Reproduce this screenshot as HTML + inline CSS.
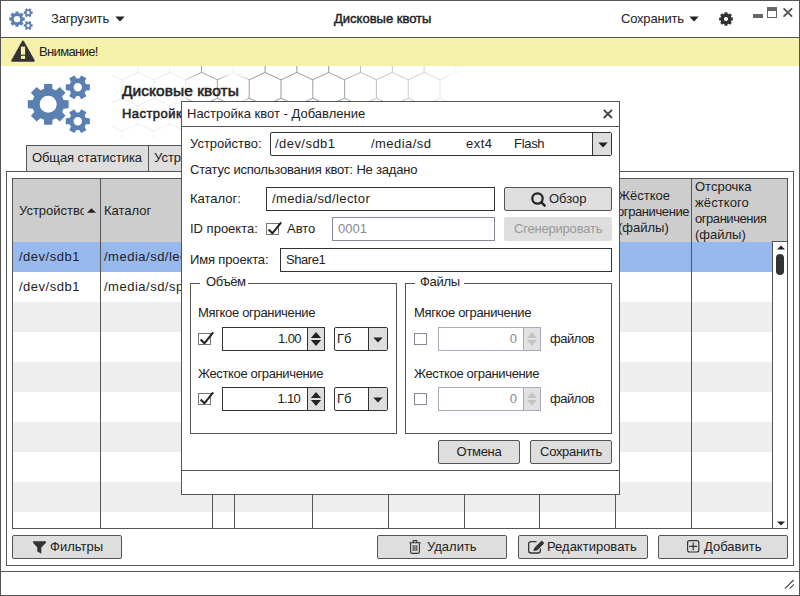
<!DOCTYPE html>
<html lang="ru">
<head>
<meta charset="utf-8">
<title>Дисковые квоты</title>
<style>
html,body{margin:0;padding:0;}
body{width:800px;height:596px;position:relative;overflow:hidden;background:#fff;
 font-family:"Liberation Sans",sans-serif;font-size:13px;color:#222;}
*{box-sizing:border-box;}
.a{position:absolute;white-space:nowrap;line-height:16px;}
.win{position:absolute;left:0;top:0;width:800px;height:596px;border:1px solid #555;border-left-width:1px;}
.btn{position:absolute;background:#dedede;border:1px solid #555;border-radius:2px;}
.inp{position:absolute;background:#fff;border:1px solid #333;}
.ln{position:absolute;background:#555;}
.b{font-weight:bold;}
svg{position:absolute;overflow:visible;}
</style>
</head>
<body>
<!-- ===== main window ===== -->
<div class="win"></div>
<div class="ln" style="left:0;top:37px;width:800px;height:1px;"></div>

<!-- title bar -->
<svg style="left:9px;top:8px;" width="24" height="22" viewBox="0 0 63.5 58"><path fill="#5a80b2" fill-rule="evenodd" d="M36.60,24.96 L41.60,25.24 L41.60,33.36 L36.60,33.64 L35.16,37.12 L38.49,40.86 L32.76,46.59 L29.02,43.26 L25.54,44.70 L25.26,49.70 L17.14,49.70 L16.86,44.70 L13.38,43.26 L9.64,46.59 L3.91,40.86 L7.24,37.12 L5.80,33.64 L0.80,33.36 L0.80,25.24 L5.80,24.96 L7.24,21.48 L3.91,17.74 L9.64,12.01 L13.38,15.34 L16.86,13.90 L17.14,8.90 L25.26,8.90 L25.54,13.90 L29.02,15.34 L32.76,12.01 L38.49,17.74 L35.16,21.48Z M29.70,29.30 A8.50,8.50 0 1,0 12.70,29.30 A8.50,8.50 0 1,0 29.70,29.30Z M59.02,9.15 L62.84,9.34 L62.84,15.26 L59.02,15.45 L57.64,17.84 L59.38,21.25 L54.26,24.21 L52.18,20.99 L49.42,20.99 L47.34,24.21 L42.22,21.25 L43.96,17.84 L42.58,15.45 L38.76,15.26 L38.76,9.34 L42.58,9.15 L43.96,6.76 L42.22,3.35 L47.34,0.39 L49.42,3.61 L52.18,3.61 L54.26,0.39 L59.38,3.35 L57.64,6.76Z M55.00,12.30 A4.20,4.20 0 1,0 46.60,12.30 A4.20,4.20 0 1,0 55.00,12.30Z M59.02,43.05 L62.84,43.24 L62.84,49.16 L59.02,49.35 L57.64,51.74 L59.38,55.15 L54.26,58.11 L52.18,54.89 L49.42,54.89 L47.34,58.11 L42.22,55.15 L43.96,51.74 L42.58,49.35 L38.76,49.16 L38.76,43.24 L42.58,43.05 L43.96,40.66 L42.22,37.25 L47.34,34.29 L49.42,37.51 L52.18,37.51 L54.26,34.29 L59.38,37.25 L57.64,40.66Z M55.00,46.20 A4.20,4.20 0 1,0 46.60,46.20 A4.20,4.20 0 1,0 55.00,46.20Z"/></svg>
<div class="a" id="t_load" style="left:51px;top:11px;letter-spacing:-0.15px;">Загрузить</div>
<svg style="left:115px;top:16px;" width="10" height="6" viewBox="0 0 10 6"><path fill="#222" d="M0.3,0.5 H9.7 L5,5.5Z"/></svg>
<div class="a" id="t_title" style="left:334px;top:11px;-webkit-text-stroke:0.45px #222;">Дисковые квоты</div>
<div class="a" id="t_save" style="left:621px;top:11px;letter-spacing:-0.2px;">Сохранить</div>
<svg style="left:689px;top:16px;" width="10" height="6" viewBox="0 0 10 6"><path fill="#222" d="M0.3,0.5 H9.7 L5,5.5Z"/></svg>
<svg style="left:718px;top:11px;" width="16" height="16" viewBox="0 0 16 16"><path fill="#333" fill-rule="evenodd" d="M13.27,6.42 L14.85,6.58 L14.85,9.42 L13.27,9.58 L12.84,10.61 L13.85,11.84 L11.84,13.85 L10.61,12.84 L9.58,13.27 L9.42,14.85 L6.58,14.85 L6.42,13.27 L5.39,12.84 L4.16,13.85 L2.15,11.84 L3.16,10.61 L2.73,9.58 L1.15,9.42 L1.15,6.58 L2.73,6.42 L3.16,5.39 L2.15,4.16 L4.16,2.15 L5.39,3.16 L6.42,2.73 L6.58,1.15 L9.42,1.15 L9.58,2.73 L10.61,3.16 L11.84,2.15 L13.85,4.16 L12.84,5.39Z M10.10,8.00 A2.10,2.10 0 1,0 5.90,8.00 A2.10,2.10 0 1,0 10.10,8.00Z"/></svg>
<div class="a" style="left:753px;top:14px;width:10px;height:4px;background:#666;"></div>
<div class="a" style="left:767px;top:7px;width:10px;height:11px;border:1px solid #666;border-top-width:4px;background:#fff;"></div>
<svg style="left:783px;top:8px;" width="10" height="9" viewBox="0 0 10 9"><path stroke="#555" stroke-width="1.9" fill="none" d="M0.6,0.4 L9.1,8.6 M9.1,0.4 L0.6,8.6"/></svg>

<!-- warning band -->
<div class="a" style="left:1px;top:38px;width:798px;height:28px;background:#f5f0aa;"></div>
<svg style="left:11px;top:40px;" width="24" height="22" viewBox="0 0 24 22"><path fill="#333" stroke="#333" stroke-width="2" stroke-linejoin="round" d="M12,1.5 L22.8,20.8 H1.2Z"/><rect x="9.9" y="6.6" width="4.2" height="8.1" fill="#f5f0aa"/><rect x="9.9" y="15.8" width="4.2" height="3.1" fill="#f5f0aa"/></svg>
<div class="a" id="t_warn" style="left:39px;top:44px;letter-spacing:-0.65px;">Внимание!</div>

<!-- honeycomb -->
<svg style="left:186px;top:66px;overflow:hidden;" width="280" height="36" viewBox="186 66 280 36"><defs><linearGradient id="hf" gradientUnits="userSpaceOnUse" x1="186" x2="466" y1="0" y2="0"><stop offset="0" stop-color="#fff" stop-opacity="0.5"/><stop offset="0.05" stop-color="#fff" stop-opacity="0.15"/><stop offset="0.12" stop-color="#fff" stop-opacity="0.2"/><stop offset="0.16" stop-color="#fff" stop-opacity="0.88"/><stop offset="0.21" stop-color="#fff" stop-opacity="0.6"/><stop offset="0.23" stop-color="#fff" stop-opacity="0.1"/><stop offset="0.55" stop-color="#fff" stop-opacity="0.15"/><stop offset="0.62" stop-color="#fff" stop-opacity="0.4"/><stop offset="0.85" stop-color="#fff" stop-opacity="0.6"/><stop offset="1" stop-color="#fff" stop-opacity="1"/></linearGradient></defs><path d="M153.8,79.8 L169.7,72.4 L185.6,79.8 M153.8,79.8 V98.2 M185.6,79.8 L201.5,72.4 L217.4,79.8 M185.6,79.8 V98.2 M217.4,79.8 L233.3,72.4 L249.2,79.8 M217.4,79.8 V98.2 M249.2,79.8 L265.1,72.4 L281.0,79.8 M249.2,79.8 V98.2 M281.0,79.8 L296.9,72.4 L312.8,79.8 M281.0,79.8 V98.2 M312.8,79.8 L328.7,72.4 L344.6,79.8 M312.8,79.8 V98.2 M344.6,79.8 L360.5,72.4 L376.4,79.8 M344.6,79.8 V98.2 M376.4,79.8 L392.3,72.4 L408.2,79.8 M376.4,79.8 V98.2 M408.2,79.8 L424.1,72.4 L440.0,79.8 M408.2,79.8 V98.2 M440.0,79.8 L455.9,72.4 L471.8,79.8 M440.0,79.8 V98.2 M169.7,54.0 L185.6,46.6 L201.5,54.0 M169.7,54.0 V72.4 M201.5,54.0 L217.4,46.6 L233.3,54.0 M201.5,54.0 V72.4 M233.3,54.0 L249.2,46.6 L265.1,54.0 M233.3,54.0 V72.4 M265.1,54.0 L281.0,46.6 L296.9,54.0 M265.1,54.0 V72.4 M296.9,54.0 L312.8,46.6 L328.7,54.0 M296.9,54.0 V72.4 M328.7,54.0 L344.6,46.6 L360.5,54.0 M328.7,54.0 V72.4 M360.5,54.0 L376.4,46.6 L392.3,54.0 M360.5,54.0 V72.4 M392.3,54.0 L408.2,46.6 L424.1,54.0 M392.3,54.0 V72.4 M424.1,54.0 L440.0,46.6 L455.9,54.0 M424.1,54.0 V72.4 M455.9,54.0 L471.8,46.6 L487.7,54.0 M455.9,54.0 V72.4 M169.7,105.6 L185.6,98.2 L201.5,105.6 M169.7,105.6 V124.0 M201.5,105.6 L217.4,98.2 L233.3,105.6 M201.5,105.6 V124.0 M233.3,105.6 L249.2,98.2 L265.1,105.6 M233.3,105.6 V124.0 M265.1,105.6 L281.0,98.2 L296.9,105.6 M265.1,105.6 V124.0 M296.9,105.6 L312.8,98.2 L328.7,105.6 M296.9,105.6 V124.0 M328.7,105.6 L344.6,98.2 L360.5,105.6 M328.7,105.6 V124.0 M360.5,105.6 L376.4,98.2 L392.3,105.6 M360.5,105.6 V124.0 M392.3,105.6 L408.2,98.2 L424.1,105.6 M392.3,105.6 V124.0 M424.1,105.6 L440.0,98.2 L455.9,105.6 M424.1,105.6 V124.0 M455.9,105.6 L471.8,98.2 L487.7,105.6 M455.9,105.6 V124.0" stroke="#666" stroke-width="0.75" fill="none"/><rect x="186" y="66" width="280" height="36" fill="url(#hf)"/></svg>

<svg style="left:112px;top:66px;overflow:hidden;" width="74" height="72" viewBox="112 66 74 72"><path d="M74.3,54.0 L90.2,46.6 L106.1,54.0 M74.3,54.0 V72.4 M106.1,54.0 L122.0,46.6 L137.9,54.0 M106.1,54.0 V72.4 M137.9,54.0 L153.8,46.6 L169.7,54.0 M137.9,54.0 V72.4 M169.7,54.0 L185.6,46.6 L201.5,54.0 M169.7,54.0 V72.4 M201.5,54.0 L217.4,46.6 L233.3,54.0 M201.5,54.0 V72.4 M58.4,79.8 L74.3,72.4 L90.2,79.8 M58.4,79.8 V98.2 M90.2,79.8 L106.1,72.4 L122.0,79.8 M90.2,79.8 V98.2 M122.0,79.8 L137.9,72.4 L153.8,79.8 M122.0,79.8 V98.2 M153.8,79.8 L169.7,72.4 L185.6,79.8 M153.8,79.8 V98.2 M185.6,79.8 L201.5,72.4 L217.4,79.8 M185.6,79.8 V98.2 M74.3,105.6 L90.2,98.2 L106.1,105.6 M74.3,105.6 V124.0 M106.1,105.6 L122.0,98.2 L137.9,105.6 M106.1,105.6 V124.0 M137.9,105.6 L153.8,98.2 L169.7,105.6 M137.9,105.6 V124.0 M169.7,105.6 L185.6,98.2 L201.5,105.6 M169.7,105.6 V124.0 M201.5,105.6 L217.4,98.2 L233.3,105.6 M201.5,105.6 V124.0 M58.4,131.4 L74.3,124.0 L90.2,131.4 M58.4,131.4 V149.8 M90.2,131.4 L106.1,124.0 L122.0,131.4 M90.2,131.4 V149.8 M122.0,131.4 L137.9,124.0 L153.8,131.4 M122.0,131.4 V149.8 M153.8,131.4 L169.7,124.0 L185.6,131.4 M153.8,131.4 V149.8 M185.6,131.4 L201.5,124.0 L217.4,131.4 M185.6,131.4 V149.8" stroke="#777" stroke-width="0.8" fill="none" opacity="0.17"/></svg>
<!-- header -->
<svg style="left:27px;top:75px;" width="63.5" height="58" viewBox="0 0 63.5 58"><path fill="#5a80b2" fill-rule="evenodd" d="M36.60,24.96 L41.60,25.24 L41.60,33.36 L36.60,33.64 L35.16,37.12 L38.49,40.86 L32.76,46.59 L29.02,43.26 L25.54,44.70 L25.26,49.70 L17.14,49.70 L16.86,44.70 L13.38,43.26 L9.64,46.59 L3.91,40.86 L7.24,37.12 L5.80,33.64 L0.80,33.36 L0.80,25.24 L5.80,24.96 L7.24,21.48 L3.91,17.74 L9.64,12.01 L13.38,15.34 L16.86,13.90 L17.14,8.90 L25.26,8.90 L25.54,13.90 L29.02,15.34 L32.76,12.01 L38.49,17.74 L35.16,21.48Z M29.70,29.30 A8.50,8.50 0 1,0 12.70,29.30 A8.50,8.50 0 1,0 29.70,29.30Z M59.02,9.15 L62.84,9.34 L62.84,15.26 L59.02,15.45 L57.64,17.84 L59.38,21.25 L54.26,24.21 L52.18,20.99 L49.42,20.99 L47.34,24.21 L42.22,21.25 L43.96,17.84 L42.58,15.45 L38.76,15.26 L38.76,9.34 L42.58,9.15 L43.96,6.76 L42.22,3.35 L47.34,0.39 L49.42,3.61 L52.18,3.61 L54.26,0.39 L59.38,3.35 L57.64,6.76Z M55.00,12.30 A4.20,4.20 0 1,0 46.60,12.30 A4.20,4.20 0 1,0 55.00,12.30Z M59.02,43.05 L62.84,43.24 L62.84,49.16 L59.02,49.35 L57.64,51.74 L59.38,55.15 L54.26,58.11 L52.18,54.89 L49.42,54.89 L47.34,58.11 L42.22,55.15 L43.96,51.74 L42.58,49.35 L38.76,49.16 L38.76,43.24 L42.58,43.05 L43.96,40.66 L42.22,37.25 L47.34,34.29 L49.42,37.51 L52.18,37.51 L54.26,34.29 L59.38,37.25 L57.64,40.66Z M55.00,46.20 A4.20,4.20 0 1,0 46.60,46.20 A4.20,4.20 0 1,0 55.00,46.20Z"/></svg>
<div class="a b" id="t_h1" style="left:122px;top:81px;font-size:15.5px;line-height:20px;letter-spacing:0.05px;font-weight:normal;-webkit-text-stroke:0.55px #222;">Дисковые квоты</div>
<div class="a b" id="t_h2" style="left:122px;top:106px;font-weight:normal;letter-spacing:0.45px;-webkit-text-stroke:0.5px #222;">Настройка дисковых квот</div>

<!-- tabs -->
<div class="a" style="left:26px;top:145px;width:123px;height:27px;background:#dedede;border:1px solid #555;"></div>
<div class="a" style="left:148px;top:145px;width:110px;height:27px;background:#dedede;border:1px solid #555;"></div>
<div class="a" id="t_tab1" style="left:32px;top:150px;letter-spacing:-0.1px;">Общая статистика</div>
<div class="a" id="t_tab2" style="left:154px;top:150px;">Устройства</div>

<!-- tab panel -->
<div class="a" style="left:6px;top:171px;width:788px;height:395px;background:#fff;border:1px solid #555;"></div>

<!-- table -->
<div class="a" style="left:12px;top:178px;width:776px;height:351px;background:#fff;border:1px solid #555;overflow:hidden;">
  <div class="a" style="left:0;top:0;width:774px;height:63px;background:#cdcdcd;"></div>
  <div class="a" style="left:0;top:63px;width:774px;height:30px;background:#97b9ee;"></div>
  <div class="a" style="left:0;top:123px;width:774px;height:30px;background:#eee;"></div>
  <div class="a" style="left:0;top:183px;width:774px;height:30px;background:#eee;"></div>
  <div class="a" style="left:0;top:243px;width:774px;height:30px;background:#eee;"></div>
  <div class="a" style="left:0;top:303px;width:774px;height:30px;background:#eee;"></div>
  <!-- column lines (abs x - 13) -->
  <div class="ln" style="left:87px;top:0;width:1px;height:349px;"></div>
  <div class="ln" style="left:199px;top:0;width:1px;height:349px;"></div>
  <div class="ln" style="left:221px;top:0;width:1px;height:349px;"></div>
  <div class="ln" style="left:299px;top:0;width:1px;height:349px;"></div>
  <div class="ln" style="left:375px;top:0;width:1px;height:349px;"></div>
  <div class="ln" style="left:451px;top:0;width:1px;height:349px;"></div>
  <div class="ln" style="left:526px;top:0;width:1px;height:349px;"></div>
  <div class="ln" style="left:602px;top:0;width:1px;height:349px;"></div>
  <div class="ln" style="left:678px;top:0;width:1px;height:349px;"></div>
  <!-- scrollbar -->
  <div class="a" style="left:759px;top:62px;width:16px;height:288px;background:#fff;border-left:1px solid #555;border-top:1px solid #555;"></div>
  <svg style="left:764px;top:66px;" width="8" height="5" viewBox="0 0 8 5"><path fill="#222" d="M0,4.6 L4,0.4 L8,4.6Z"/></svg>
  <div class="a" style="left:763px;top:75px;width:8px;height:21px;border-radius:4px;background:#333;"></div>
  <svg style="left:764px;top:342px;" width="8" height="5" viewBox="0 0 8 5"><path fill="#222" d="M0,0.4 L4,4.6 L8,0.4Z"/></svg>
</div>
<!-- table texts -->
<div class="a" id="t_c1" style="left:19px;top:203px;width:65px;overflow:hidden;">Устройство</div>
<svg style="left:87px;top:208px;" width="9" height="5" viewBox="0 0 9 5"><path fill="#222" d="M0,4.8 L4.5,0.3 L9,4.8Z"/></svg>
<div class="a" id="t_c2" style="left:104px;top:203px;">Каталог</div>
<div class="a" id="t_c9" style="left:618px;top:188px;width:73px;overflow:hidden;">Жёсткое<br><span style="letter-spacing:-0.4px;margin-left:-1px;">ограничение</span><br>(файлы)</div>
<div class="a" id="t_c10" style="left:695px;top:179px;">Отсрочка<br><span style="letter-spacing:0.1px;">жёсткого</span><br><span style="letter-spacing:-0.45px;">ограничения</span><br>(файлы)</div>
<div class="a" id="t_r1a" style="left:19px;top:249px;letter-spacing:0.5px;">/dev/sdb1</div>
<div class="a" id="t_r1b" style="left:104px;top:249px;letter-spacing:0.5px;">/media/sd/lector</div>
<div class="a" id="t_r2a" style="left:19px;top:279px;letter-spacing:0.5px;">/dev/sdb1</div>
<div class="a" id="t_r2b" style="left:104px;top:279px;letter-spacing:0.5px;">/media/sd/sport</div>

<!-- bottom buttons -->
<div class="btn" style="left:12px;top:535px;width:110px;height:24px;"></div>
<svg style="left:33px;top:541px;" width="13" height="13" viewBox="0 0 13 13"><path fill="#333" d="M0.6,0.2 H12.4 Q13,0.2 13,0.9 V1.7 L8.3,6.4 V12.7 L4.3,10.4 V6.4 L0,1.7 V0.9 Q0,0.2 0.6,0.2Z"/></svg>
<div class="a" id="t_filt" style="left:50px;top:539px;">Фильтры</div>

<div class="btn" style="left:377px;top:535px;width:130px;height:24px;"></div>
<svg style="left:409px;top:540px;" width="12" height="14" viewBox="0 0 12 14"><g fill="none" stroke="#333" stroke-width="1.1"><path d="M0.3,2.8 H11.7 M4,2.6 V1.2 Q4,0.6 4.6,0.6 H7.4 Q8,0.6 8,1.2 V2.6 M1.6,3 V12 Q1.6,13.4 3,13.4 H9 Q10.4,13.4 10.4,12 V3"/><path d="M4.2,5.2 V11 M6,5.2 V11 M7.8,5.2 V11" stroke-width="1"/></g></svg>
<div class="a" id="t_del" style="left:427px;top:539px;">Удалить</div>

<div class="btn" style="left:518px;top:535px;width:130px;height:24px;"></div>
<svg style="left:528px;top:539.5px;" width="17" height="14" viewBox="0 0 17 14"><path fill="none" stroke="#333" stroke-width="1.3" d="M8.5,1.6 H3 Q0.7,1.6 0.7,3.9 V10.7 Q0.7,13 3,13 H10 Q12.3,13 12.3,10.7 V8.5"/><path fill="#333" d="M5.4,11.1 L6.2,7.9 L12.9,1.2 Q13.7,0.4 14.5,1.2 L15.6,2.3 Q16.4,3.1 15.6,3.9 L8.9,10.6 Z"/></svg>
<div class="a" id="t_edit" style="left:547px;top:539px;">Редактировать</div>

<div class="btn" style="left:658px;top:535px;width:130px;height:24px;"></div>
<svg style="left:687px;top:540px;" width="13" height="13" viewBox="0 0 13 13"><path fill="none" stroke="#333" stroke-width="1.2" d="M2.6,0.6 H9.8 Q11.8,0.6 11.8,2.6 V10 Q11.8,12 9.8,12 H2.6 Q0.6,12 0.6,10 V2.6 Q0.6,0.6 2.6,0.6Z M6.2,2.4 V10.2 M2.3,6.3 H10.1"/></svg>
<div class="a" id="t_add" style="left:704px;top:539px;">Добавить</div>

<!-- status bar -->
<div class="ln" style="left:0;top:571px;width:800px;height:1px;"></div>
<svg style="left:784px;top:579px;" width="11" height="11" viewBox="0 0 11 11"><path stroke="#444" stroke-width="1.1" fill="none" d="M1,9.6 L9.6,1 M5.6,9.6 L9.9,5.3"/></svg>

<!-- ===== dialog ===== -->
<div class="a" style="left:181px;top:101px;width:439px;height:394px;background:#fff;border:1px solid #555;"></div>
<div class="ln" style="left:181px;top:126px;width:439px;height:1px;"></div>
<div class="ln" style="left:181px;top:470px;width:439px;height:1px;"></div>
<div class="a" id="d_title" style="left:187px;top:106px;">Настройка квот - Добавление</div>
<svg style="left:603px;top:109px;" width="10" height="10" viewBox="0 0 10 10"><path stroke="#444" stroke-width="1.9" fill="none" d="M0.8,0.8 L9,9 M9,0.8 L0.8,9"/></svg>

<div class="a" id="d_dev" style="left:190px;top:136px;">Устройство:</div>
<div class="inp" style="left:270px;top:132px;width:342px;height:24px;border-radius:2px;"></div>
<div class="a" style="left:592px;top:133px;width:19px;height:22px;background:#dedede;border-left:1px solid #333;"></div>
<svg style="left:598px;top:142px;" width="10" height="6" viewBox="0 0 10 6"><path fill="#222" d="M0.3,0.5 H9.7 L5,5.5Z"/></svg>
<div class="a" id="d_s1" style="left:275px;top:136px;letter-spacing:0.45px;">/dev/sdb1</div>
<div class="a" id="d_s2" style="left:371px;top:136px;letter-spacing:0.45px;">/media/sd</div>
<div class="a" id="d_s3" style="left:466px;top:136px;letter-spacing:0.5px;">ext4</div>
<div class="a" id="d_s4" style="left:514px;top:136px;letter-spacing:-0.3px;">Flash</div>

<div class="a" id="d_stat" style="left:190px;top:162px;letter-spacing:-0.19px;">Статус использования квот: Не задано</div>

<div class="a" id="d_cat" style="left:190px;top:191px;">Каталог:</div>
<div class="inp" style="left:266px;top:187px;width:229px;height:24px;"></div>
<div class="a" id="d_catv" style="left:272px;top:191px;letter-spacing:0.4px;">/media/sd/lector</div>
<div class="btn" style="left:504px;top:187px;width:108px;height:24px;"></div>
<svg style="left:530.5px;top:191.8px;" width="15" height="15" viewBox="0 0 15 15"><circle cx="6.5" cy="6.5" r="5.2" fill="none" stroke="#222" stroke-width="2.2"/><path d="M10.4,10.4 L13.7,13.7" stroke="#222" stroke-width="2.4" stroke-linecap="round"/></svg>
<div class="a" id="d_obz" style="left:549px;top:191px;">Обзор</div>

<div class="a" id="d_id" style="left:190px;top:221px;">ID проекта:</div>
<div class="a" style="left:266px;top:223px;width:13px;height:12px;border:1px solid #777;background:#fff;"></div>
<svg style="left:267px;top:220px;" width="15" height="16" viewBox="0 0 15 16"><path fill="none" stroke="#222" stroke-width="2" stroke-linejoin="round" d="M1.6,9.5 L5.4,13.3 L14.2,2.4"/></svg>
<div class="a" id="d_auto" style="left:287px;top:221px;">Авто</div>
<div class="inp" style="left:332px;top:217px;width:163px;height:24px;border-color:#889;"></div>
<div class="a" id="d_idv" style="left:338px;top:221px;color:#889;">0001</div>
<div class="a" style="left:504px;top:217px;width:108px;height:24px;background:#dedede;border-radius:2px;"></div>
<div class="a" id="d_gen" style="left:514px;top:221px;color:#999;letter-spacing:-0.2px;">Сгенерировать</div>

<div class="a" id="d_name" style="left:190px;top:252px;letter-spacing:-0.15px;">Имя проекта:</div>
<div class="inp" style="left:280px;top:248px;width:332px;height:24px;"></div>
<div class="a" id="d_namev" style="left:286px;top:252px;letter-spacing:-0.45px;">Share1</div>

<!-- fieldset volume -->
<div class="a" style="left:190px;top:283px;width:207px;height:151px;border:1px solid #555;"></div>
<div class="a" style="left:200px;top:276px;width:48px;height:14px;background:#fff;"></div>
<div class="a" id="f_v" style="left:206px;top:274px;letter-spacing:-0.35px;">Объём</div>
<div class="a" id="f_v1" style="left:198px;top:305px;letter-spacing:-0.33px;">Мягкое ограничение</div>
<div class="a" style="left:198px;top:333px;width:13px;height:12px;border:1px solid #777;background:#fff;"></div>
<svg style="left:199px;top:330px;" width="15" height="16" viewBox="0 0 15 16"><path fill="none" stroke="#222" stroke-width="2" stroke-linejoin="round" d="M1.6,9.5 L5.4,13.3 L14.2,2.4"/></svg>
<div class="inp" style="left:222px;top:327px;width:103px;height:24px;"></div>
<div class="a" style="left:307px;top:328px;width:17px;height:22px;background:#dedede;border-left:1px solid #333;"></div>
<svg style="left:310px;top:331px;" width="12" height="16" viewBox="0 0 12 16"><path fill="#222" d="M0.9,6.9 L6,1.1 L11.1,6.9Z M0.9,9.1 L6,14.9 L11.1,9.1Z"/></svg>
<div class="a" id="f_v1v" style="left:222px;top:331px;width:79px;text-align:right;letter-spacing:-0.6px;">1.00</div>
<div class="inp" style="left:334px;top:327px;width:54px;height:24px;border-radius:2px;"></div>
<div class="a" style="left:368px;top:328px;width:19px;height:22px;background:#dedede;border-left:1px solid #333;"></div>
<svg style="left:373px;top:337px;" width="10" height="6" viewBox="0 0 10 6"><path fill="#222" d="M0.3,0.5 H9.7 L5,5.5Z"/></svg>
<div class="a" id="f_u1" style="left:337px;top:331px;">Гб</div>

<div class="a" id="f_v2" style="left:198px;top:366px;letter-spacing:-0.36px;">Жесткое ограничение</div>
<div class="a" style="left:198px;top:393px;width:13px;height:12px;border:1px solid #777;background:#fff;"></div>
<svg style="left:199px;top:390px;" width="15" height="16" viewBox="0 0 15 16"><path fill="none" stroke="#222" stroke-width="2" stroke-linejoin="round" d="M1.6,9.5 L5.4,13.3 L14.2,2.4"/></svg>
<div class="inp" style="left:222px;top:387px;width:103px;height:24px;"></div>
<div class="a" style="left:307px;top:388px;width:17px;height:22px;background:#dedede;border-left:1px solid #333;"></div>
<svg style="left:310px;top:391px;" width="12" height="16" viewBox="0 0 12 16"><path fill="#222" d="M0.9,6.9 L6,1.1 L11.1,6.9Z M0.9,9.1 L6,14.9 L11.1,9.1Z"/></svg>
<div class="a" id="f_v2v" style="left:222px;top:391px;width:78px;text-align:right;letter-spacing:-0.7px;">1.10</div>
<div class="inp" style="left:334px;top:387px;width:54px;height:24px;border-radius:2px;"></div>
<div class="a" style="left:368px;top:388px;width:19px;height:22px;background:#dedede;border-left:1px solid #333;"></div>
<svg style="left:373px;top:397px;" width="10" height="6" viewBox="0 0 10 6"><path fill="#222" d="M0.3,0.5 H9.7 L5,5.5Z"/></svg>
<div class="a" id="f_u2" style="left:337px;top:391px;">Гб</div>

<!-- fieldset files -->
<div class="a" style="left:405px;top:283px;width:207px;height:151px;border:1px solid #555;"></div>
<div class="a" style="left:415px;top:276px;width:49px;height:14px;background:#fff;"></div>
<div class="a" id="f_f" style="left:420px;top:274px;letter-spacing:-0.3px;">Файлы</div>
<div class="a" id="f_f1" style="left:414px;top:305px;letter-spacing:-0.33px;">Мягкое ограничение</div>
<div class="a" style="left:414px;top:333px;width:13px;height:12px;border:1px solid #889;background:#fff;"></div>
<div class="inp" style="left:438px;top:327px;width:103px;height:24px;border-color:#aab;"></div>
<div class="a" style="left:523px;top:328px;width:17px;height:22px;background:#e2e2e2;border-left:1px solid #aab;"></div>
<svg style="left:526px;top:331px;" width="12" height="16" viewBox="0 0 12 16"><path fill="#c4c4c4" d="M0.9,6.9 L6,1.1 L11.1,6.9Z M0.9,9.1 L6,14.9 L11.1,9.1Z"/></svg>
<div class="a" id="f_f1v" style="left:438px;top:331px;width:79px;text-align:right;color:#889;">0</div>
<div class="a" id="f_f1u" style="left:550px;top:331px;letter-spacing:-0.5px;">файлов</div>

<div class="a" id="f_f2" style="left:414px;top:366px;letter-spacing:-0.36px;">Жесткое ограничение</div>
<div class="a" style="left:414px;top:393px;width:13px;height:12px;border:1px solid #889;background:#fff;"></div>
<div class="inp" style="left:438px;top:387px;width:103px;height:24px;border-color:#aab;"></div>
<div class="a" style="left:523px;top:388px;width:17px;height:22px;background:#e2e2e2;border-left:1px solid #aab;"></div>
<svg style="left:526px;top:391px;" width="12" height="16" viewBox="0 0 12 16"><path fill="#c4c4c4" d="M0.9,6.9 L6,1.1 L11.1,6.9Z M0.9,9.1 L6,14.9 L11.1,9.1Z"/></svg>
<div class="a" id="f_f2v" style="left:438px;top:391px;width:79px;text-align:right;color:#889;">0</div>
<div class="a" id="f_f2u" style="left:550px;top:391px;letter-spacing:-0.5px;">файлов</div>

<!-- dialog buttons -->
<div class="btn" style="left:438px;top:440px;width:82px;height:24px;"></div>
<div class="a" id="d_cancel" style="left:438px;top:444px;width:82px;text-align:center;letter-spacing:-0.3px;">Отмена</div>
<div class="btn" style="left:530px;top:440px;width:82px;height:24px;"></div>
<div class="a" id="d_ok" style="left:530px;top:444px;width:82px;text-align:center;letter-spacing:-0.3px;">Сохранить</div>
</body>
</html>
